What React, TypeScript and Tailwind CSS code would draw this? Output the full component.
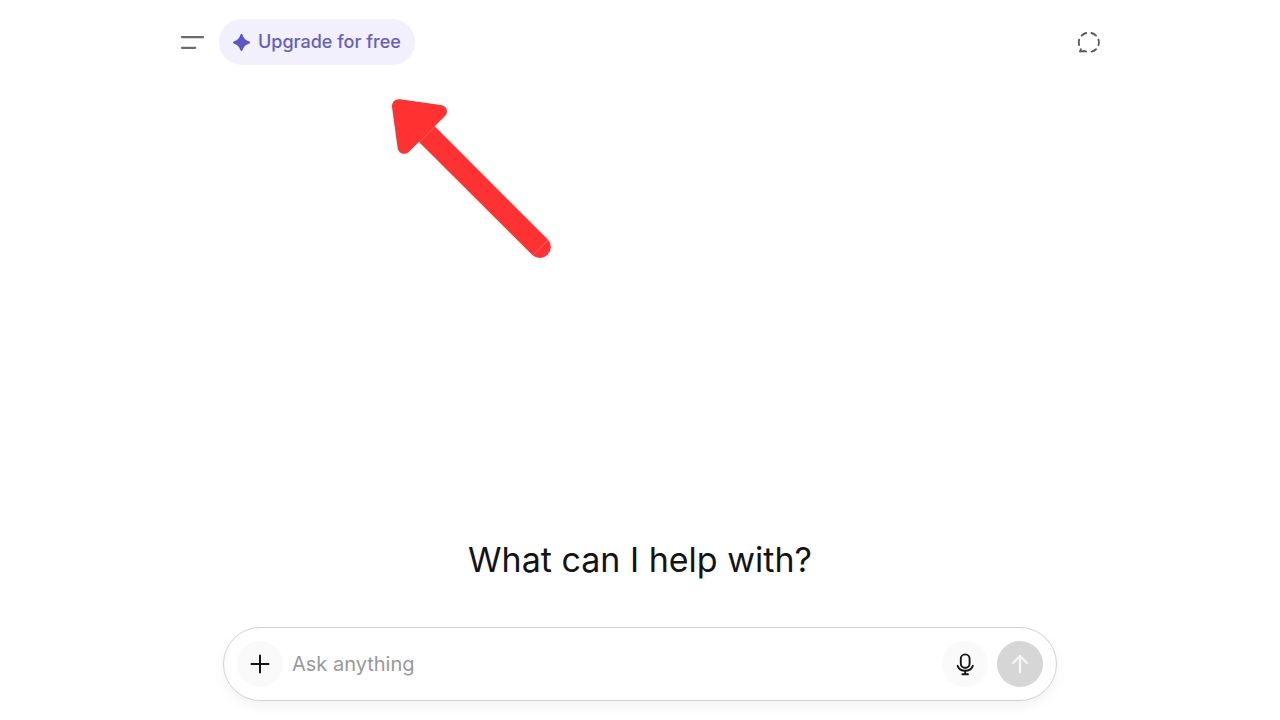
function MenuIcon() {
  return (
    <svg className="h-6 w-6" viewBox="0 0 24 24" fill="none" stroke="#6b6b6b" strokeWidth="2.2" strokeLinecap="round" aria-hidden="true">
      <path d="M2 7.2H23M2 17.8H15.2" />
    </svg>
  );
}

function SparkIcon() {
  return (
    <svg className="h-[17px] w-[17px]" viewBox="0 0 16 16" fill="#5b57c8" aria-hidden="true">
      <path d="M8 0C8.7 0 8.9.5 9.2 1.1C10.4 4.4 11.6 5.6 14.9 6.8C15.6 7.1 16 7.4 16 8C16 8.6 15.6 8.9 14.9 9.2C11.6 10.4 10.4 11.6 9.2 14.9C8.9 15.5 8.7 16 8 16C7.3 16 7.1 15.5 6.8 14.9C5.6 11.6 4.4 10.4 1.1 9.2C.4 8.9 0 8.6 0 8C0 7.4.4 7.1 1.1 6.8C4.4 5.6 5.6 4.4 6.8 1.1C7.1.5 7.3 0 8 0Z" />
    </svg>
  );
}

function TemporaryChatIcon() {
  return (
    <svg className="h-6 w-6" viewBox="0 0 24 24" fill="none" stroke="#5c5c5c" strokeWidth="1.9" strokeLinecap="round" strokeLinejoin="round" aria-hidden="true">
      <path d="M5.6 5.6A10 10 0 0 1 10.2 3" />
      <path d="M15.4 3A10 10 0 0 1 20 5.6" />
      <path d="M22.5 9.6A10 10 0 0 1 22.5 15" />
      <path d="M20 19.2A10 10 0 0 1 15.6 21.6" />
      <path d="M10.2 21.6L8.2 21L4 21.6L4.9 19.2" />
      <path d="M3.1 15A10 10 0 0 1 3.1 9.6" />
    </svg>
  );
}

function MicIcon() {
  return (
    <svg className="h-6 w-6" viewBox="0 0 24 24" fill="none" stroke="#161616" strokeWidth="1.9" strokeLinecap="round" strokeLinejoin="round" aria-hidden="true">
      <rect x="7.8" y="2.4" width="8.8" height="13.4" rx="4.4" />
      <path d="M4.6 13.8C5.8 16.9 8.6 18.8 12.2 18.8C15.8 18.8 18.6 16.9 19.8 13.8" />
      <path d="M12.2 18.8V22.2M9.4 22.2H15" />
    </svg>
  );
}

function PointerArrow() {
  return (
    <svg className="pointer-events-none absolute top-[90px] left-[200px] h-[180px] w-[180px]" viewBox="0 0 540 540" fill="#ff3131" aria-hidden="true">
      <path d="M36 51C35 36 45 27 60 28L182 45C200 48 207 65 195 78L86 186C74 197 56 191 53 175Z" />
      <path d="M114 153L161 106L505 450L458 496Z" />
      <path d="M505 450A33 33 0 0 1 458 496Z" />
      <path d="M119 156L164 111M459 495L504 451" stroke="#ff7474" strokeWidth="2" />
    </svg>
  );
}

export default function App() {
  return (
    <div className="flex min-h-screen flex-col bg-white font-['Inter','Liberation_Sans',sans-serif]">
      <div className="relative mx-auto w-full max-w-[920px]">
        <header className="flex items-center justify-between pt-[19px]">
          <div className="flex items-center gap-[15px]">
            <button type="button" aria-label="Open sidebar">
              <MenuIcon />
            </button>
            <button type="button" className="flex h-[46px] items-center gap-2 rounded-full bg-[#f1f0fc] px-[14px] text-lg font-medium text-[#6460bd]">
              <SparkIcon />
              Upgrade for free
            </button>
          </div>
          <button type="button" aria-label="Temporary chat">
            <TemporaryChatIcon />
          </button>
        </header>
        <PointerArrow />
      </div>

      <main className="mx-auto mt-auto flex w-full max-w-[834px] flex-col items-center gap-[47px] pb-[19px]">
        <h1 className="text-[34px] leading-10 text-[#141414]">What can I help with?</h1>
        <form
          className="flex w-full items-center gap-[9px] rounded-full border border-[#d2d2d2] bg-white p-[13px] shadow-[0_5px_12px_rgba(0,0,0,0.05)]"
          onSubmit={(event) => event.preventDefault()}
        >
          <button type="button" aria-label="Add attachment" className="flex h-[46px] w-[46px] items-center justify-center rounded-full bg-[#fafafa]">
            <svg className="h-5 w-5" viewBox="0 0 20 20" fill="none" stroke="#161616" strokeWidth="2" strokeLinecap="round" aria-hidden="true">
              <path d="M10 1.5V18.5M1.5 10H18.5" />
            </svg>
          </button>
          <input
            type="text"
            aria-label="Message"
            placeholder="Ask anything"
            className="min-w-0 flex-1 bg-transparent text-xl text-[#141414] outline-none placeholder:text-[#999999]"
          />
          <button type="button" aria-label="Dictate" className="flex h-[46px] w-[46px] items-center justify-center rounded-full bg-[#fafafa]">
            <MicIcon />
          </button>
          <button type="submit" aria-label="Send message" className="flex h-[46px] w-[46px] items-center justify-center rounded-full bg-[#d6d6d6]">
            <svg className="h-5 w-5" viewBox="0 0 20 20" fill="none" stroke="#f6f6f6" strokeWidth="2.2" strokeLinecap="round" strokeLinejoin="round" aria-hidden="true">
              <path d="M10 18.5V2M3 9L10 2L17 9" />
            </svg>
          </button>
        </form>
      </main>
    </div>
  );
}
